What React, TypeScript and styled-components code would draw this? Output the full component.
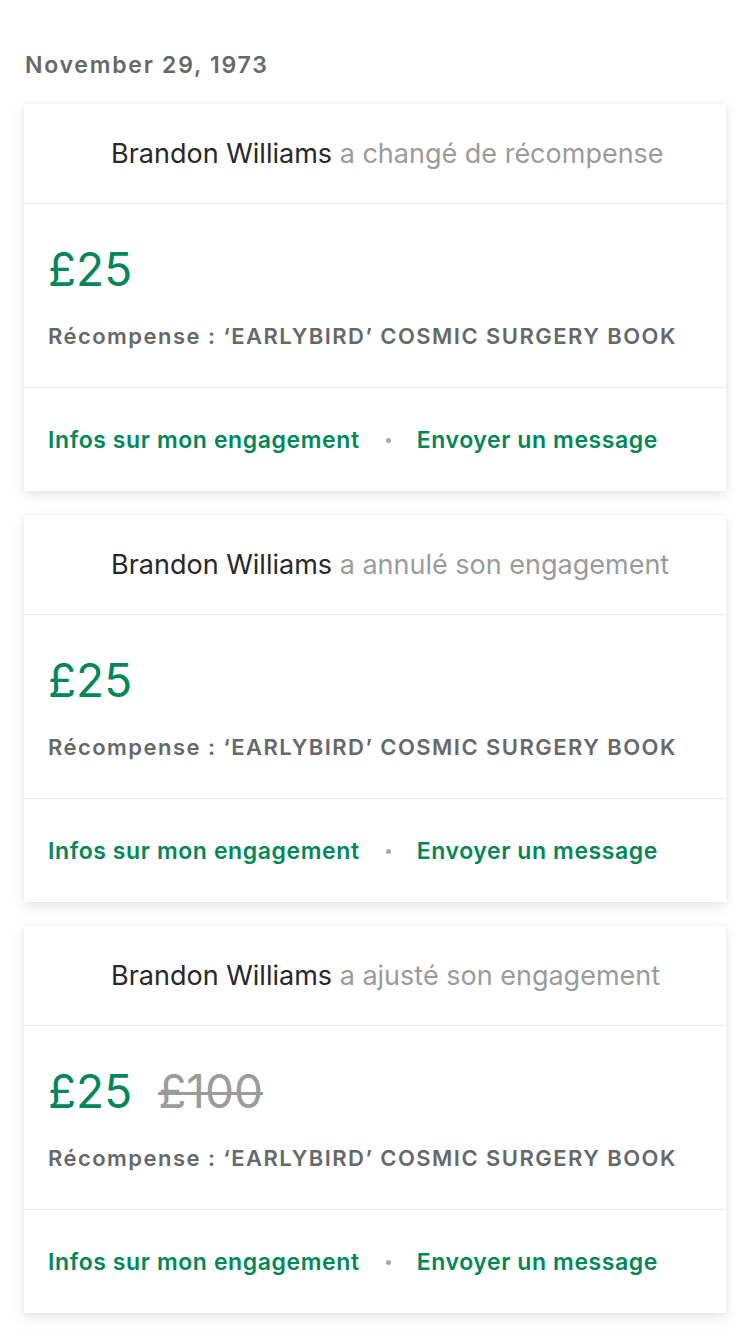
import React from "react";
import styled, { createGlobalStyle } from "styled-components";

const Global = createGlobalStyle`
  html, body { margin: 0; padding: 0; background: #ffffff; }
  body { font-family: Inter, "Noto Sans", sans-serif; -webkit-font-smoothing: antialiased; }
`;

const Page = styled.div`
  padding: 51px 24px 24px 24px;
  display: flex;
  flex-direction: column;
`;

const DateLabel = styled.div`
  font-size: 23px;
  line-height: 28px;
  font-weight: 600;
  letter-spacing: 1.75px;
  color: #656969;
  margin: 0 0 25px 1px;
`;

const List = styled.div`
  display: flex;
  flex-direction: column;
  gap: 24px;
`;

const Card = styled.div`
  background: #fff;
  box-shadow: 0 4px 12px rgba(0, 0, 0, 0.1), 0 0 4px rgba(0, 0, 0, 0.04);
  display: flex;
  flex-direction: column;
`;

const Header = styled.div`
  padding: 33px 24px 32px 87px;
  border-bottom: 1px solid #ededf0;
  font-size: 27px;
  line-height: 34px;
  color: #9b9b9b;
  white-space: nowrap;
`;

const Name = styled.span`
  color: #282828;
`;

const Body = styled.div`
  padding: 39px 24px 37px 24px;
  border-bottom: 1px solid #ededf0;
  display: flex;
  flex-direction: column;
  gap: 27px;
`;

const Amounts = styled.div`
  display: flex;
  align-items: baseline;
  gap: 26px;
  font-size: 46px;
  line-height: 52px;
`;

const Amount = styled.span<{ $old?: boolean }>`
  color: ${(p) => (p.$old ? "#9b9b9b" : "#028858")};
  text-decoration: ${(p) => (p.$old ? "line-through" : "none")};
  text-decoration-thickness: 3px;
`;

const Reward = styled.div`
  font-size: 22px;
  line-height: 28px;
  font-weight: 600;
  letter-spacing: 1.45px;
  color: #656969;
  white-space: nowrap;
`;

const Footer = styled.div`
  padding: 38px 24px 37px 24px;
  display: flex;
  align-items: center;
  gap: 26px;
`;

const Link = styled.a`
  font-size: 23px;
  line-height: 28px;
  font-weight: 600;
  letter-spacing: 0.6px;
  color: #028858;
  text-decoration: none;
  white-space: nowrap;
`;

const Dot = styled.span`
  width: 5px;
  height: 5px;
  border-radius: 50%;
  background: #a8a8a8;
`;

type Item = { action: string; amount: string; old?: string };

const items: Item[] = [
  { action: "a changé de récompense", amount: "£25" },
  { action: "a annulé son engagement", amount: "£25" },
  { action: "a ajusté son engagement", amount: "£25", old: "£100" },
  { action: "a changé de récompense", amount: "£25" },
];

export default function App() {
  return (
    <>
      <Global />
      <Page>
        <DateLabel>November 29, 1973</DateLabel>
        <List>
          {items.map((it, i) => (
            <Card key={i}>
              <Header>
                <Name>Brandon Williams</Name> {it.action}
              </Header>
              <Body>
                <Amounts>
                  <Amount>{it.amount}</Amount>
                  {it.old && <Amount $old>{it.old}</Amount>}
                </Amounts>
                <Reward>Récompense : ‘EARLYBIRD’ COSMIC SURGERY BOOK</Reward>
              </Body>
              <Footer>
                <Link href="#">Infos sur mon engagement</Link>
                <Dot />
                <Link href="#">Envoyer un message</Link>
              </Footer>
            </Card>
          ))}
        </List>
      </Page>
    </>
  );
}
